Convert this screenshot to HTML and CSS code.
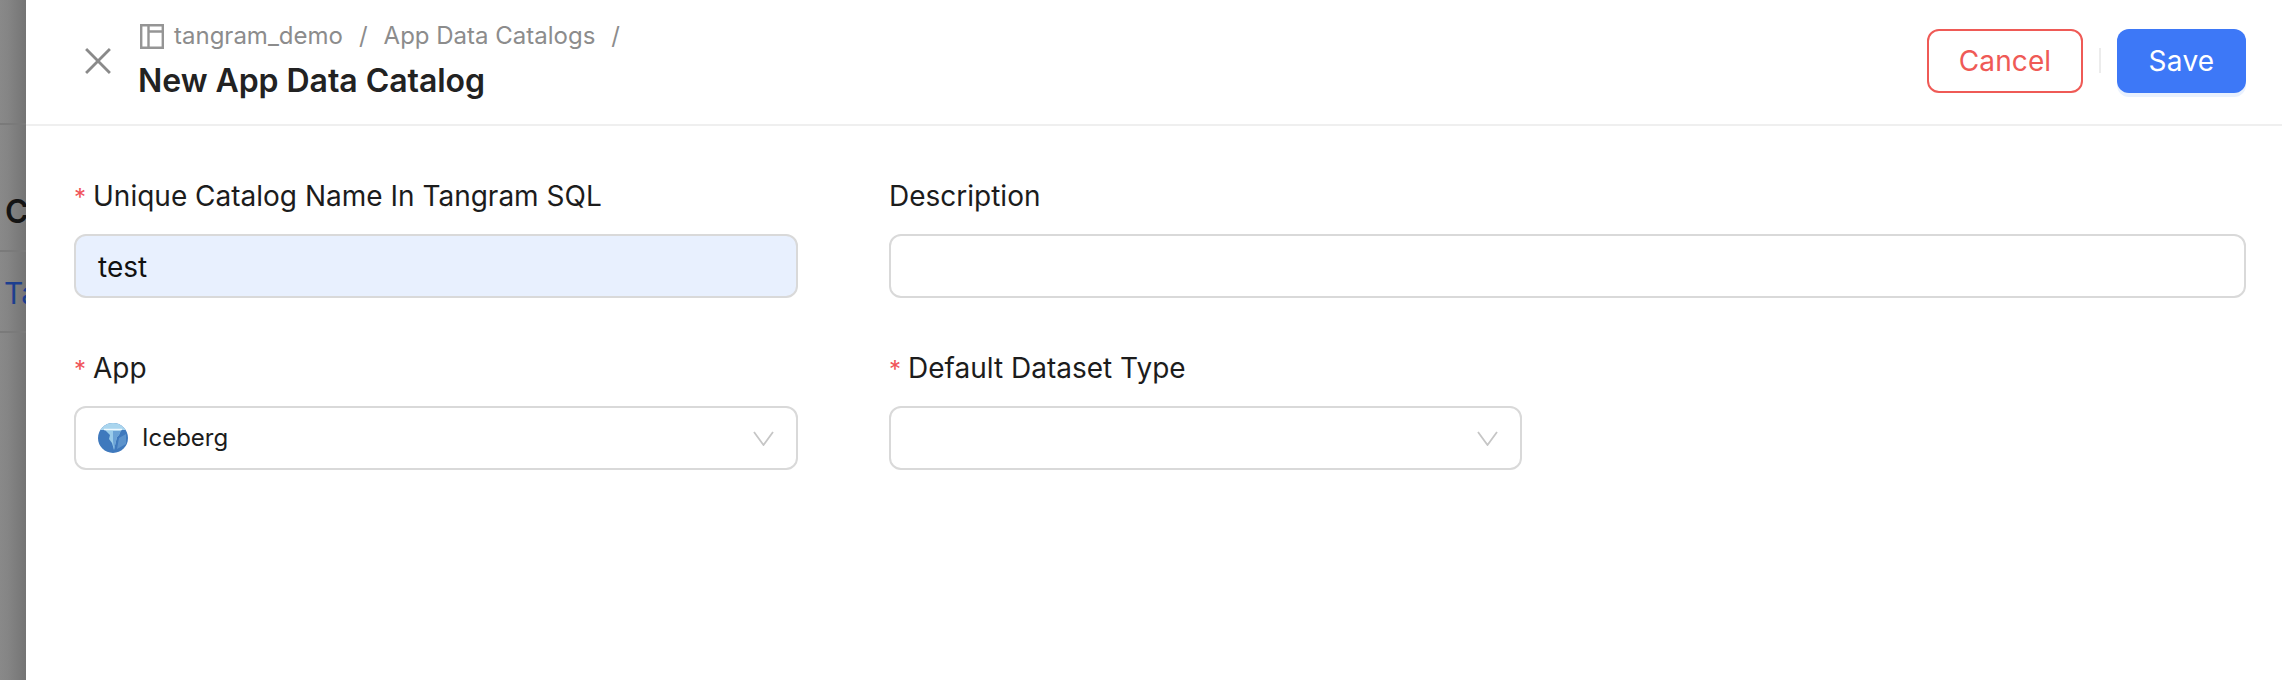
FILE: index.html
```html
<!DOCTYPE html>
<html lang="en">
<head>
<meta charset="utf-8">
<title>New App Data Catalog</title>
<link rel="stylesheet" href="styles.css">
</head>
<body>
<div class="backdrop">
  <div class="bg-top"></div>
  <div class="bg-heading">C</div>
  <div class="bg-row">Ta</div>
</div>
<section class="drawer">
  <header class="head">
    <button class="close" type="button" aria-label="Close">
      <svg viewBox="0 0 24 24" width="26" height="26"><path d="M1 1L23 23M23 1L1 23" fill="none" stroke="#8a8a8a" stroke-width="2.6"/></svg>
    </button>
    <div class="titles">
      <nav class="crumbs">
        <svg class="crumb-icon" viewBox="0 0 24 25" width="24" height="25"><path d="M1.200 1.200H22.800V23.800H1.200ZM8.500 7.500H22.800M8.500 1.200V23.800" fill="none" stroke="#959595" stroke-width="2.400"/></svg>
        <span>tangram_demo</span><span class="sep">/</span><span>App Data Catalogs</span><span class="sep">/</span>
      </nav>
      <h1 class="title">New App Data Catalog</h1>
    </div>
    <div class="actions">
      <button class="btn btn-cancel" type="button">Cancel</button>
      <span class="divider"></span>
      <button class="btn btn-save" type="button">Save</button>
    </div>
  </header>
  <form class="form">
    <div class="row">
      <div class="field col-a">
        <label class="label"><span class="req">*</span>Unique Catalog Name In Tangram SQL</label>
        <div class="control filled">test</div>
      </div>
      <div class="field col-b">
        <label class="label">Description</label>
        <div class="control"></div>
      </div>
    </div>
    <div class="row">
      <div class="field col-a">
        <label class="label"><span class="req">*</span>App</label>
        <div class="control select">
          <svg class="app-icon" viewBox="0 0 30 30" width="30" height="30">
            <defs><clipPath id="disc"><circle cx="15" cy="15" r="15"/></clipPath></defs>
            <g clip-path="url(#disc)">
              <rect width="30" height="30" fill="#3f79bd"/>
              <rect width="30" height="7" fill="#a9d5ee"/>
              <path d="M7 7H23L21 12L19 14L18 18L16 27L14 20L11 16L12 12Z" fill="#9accea"/>
              <path d="M15 8H23L21 12L19 14L18 18L16 27L15 18Z" fill="#6ba3d6"/>
              <path d="M21 15L28 11V21L19 26Z" fill="#5c93cc"/>
              <path d="M6 6.500H24" stroke="#eef8fd" stroke-width="1.300"/>
            </g>
          </svg>
          <span class="select-text">Iceberg</span>
          <svg class="chev" viewBox="0 0 21 15" width="21" height="15"><path d="M1 1L10.500 14L20 1" fill="none" stroke="#c6c6c6" stroke-width="1.800"/></svg>
        </div>
      </div>
      <div class="field col-c">
        <label class="label"><span class="req">*</span>Default Dataset Type</label>
        <div class="control select">
          <svg class="chev" viewBox="0 0 21 15" width="21" height="15"><path d="M1 1L10.500 14L20 1" fill="none" stroke="#c6c6c6" stroke-width="1.800"/></svg>
        </div>
      </div>
    </div>
  </form>
</section>
</body>
</html>
```
FILE: styles.css
```css
* { box-sizing: border-box; }
html, body { margin: 0; height: 100%; }
body {
  width: 2282px;
  height: 680px;
  overflow: hidden;
  position: relative;
  background: #fff;
  font-family: Inter, "Liberation Sans", sans-serif;
  color: #1c1c1c;
}
.backdrop {
  display: flex;
  flex-direction: column;
  width: 26px;
  height: 100%;
  overflow: hidden;
  background: linear-gradient(90deg, #898989, #858585 30%, #747474);
}
.bg-top { height: 125px; flex: none; border-bottom: 2px solid #7a7a7a; }
.bg-heading {
  height: 127px;
  flex: none;
  padding: 67px 0 0 5px;
  font-size: 32px;
  font-weight: 600;
  line-height: 40px;
  color: #141414;
  border-bottom: 2px solid #7a7a7a;
}
.bg-row {
  height: 81px;
  flex: none;
  padding: 21px 0 0 4px;
  font-size: 30px;
  line-height: 40px;
  color: #1d3f8f;
  white-space: nowrap;
  border-bottom: 2px solid #7a7a7a;
}
.drawer {
  position: absolute;
  top: 0; bottom: 0; left: 26px; right: 0;
  background: #fff;
}
.head {
  display: flex;
  align-items: center;
  height: 126px;
  border-bottom: 2px solid #efefef;
  padding: 0 36px 0 59px;
}
.close {
  display: flex;
  padding: 0;
  border: 0;
  background: none;
  margin: -2px 27px 0 0;
}
.titles { flex: 1; }
.crumbs {
  display: flex;
  align-items: center;
  height: 30px;
  font-size: 24px;
  line-height: 30px;
  color: #8c8c8c;
  margin: -2px 0 0 2px;
}
.crumb-icon { margin-right: 10px; }
.sep { margin: 0 16px; }
.title {
  margin: 10px 0 0;
  font-size: 32px;
  line-height: 40px;
  font-weight: 600;
  color: #222;
  letter-spacing: -.05px;
}
.actions { display: flex; align-items: center; padding-bottom: 3px; }
.btn {
  height: 64px;
  border-radius: 12px;
  font: 400 28px Inter, "Liberation Sans", sans-serif;
  letter-spacing: .3px;
}
.btn-cancel { width: 156px; background: #fff; border: 2px solid #ef5a56; color: #ef5a56; letter-spacing: .1px; }
.divider { width: 2px; height: 25px; margin: 0 16px; background: #ececec; }
.btn-save {
  width: 129px;
  background: #3d78f7;
  border: 0;
  color: #fff;
  box-shadow: 0 4px 0 #e9f1fe;
}
.form { padding: 52px 36px 0 48px; }
.row { display: flex; gap: 91px; margin-bottom: 52px; }
.field { display: flex; flex-direction: column; }
.col-a { width: 724px; }
.col-b { flex: 1; }
.col-c { width: 633px; }
.label {
  height: 36px;
  font-size: 28px;
  line-height: 36px;
  color: #1c1c1c;
  margin-bottom: 20px;
  white-space: nowrap;
}
.req { color: #f0545a; font-size: 24px; margin-right: 7px; }
.control {
  height: 64px;
  border: 2px solid #d9d9d9;
  border-radius: 12px;
  padding: 0 22px;
  font-size: 28px;
  line-height: 62px;
  background: #fff;
}
.filled { background: #e8f0fe; color: #111; }
.select { display: flex; align-items: center; padding-right: 22px; }
.app-icon { margin-right: 14px; flex: none; }
.select-text { font-size: 24px; color: #1c1c1c; }
.chev { margin-left: auto; }
```
